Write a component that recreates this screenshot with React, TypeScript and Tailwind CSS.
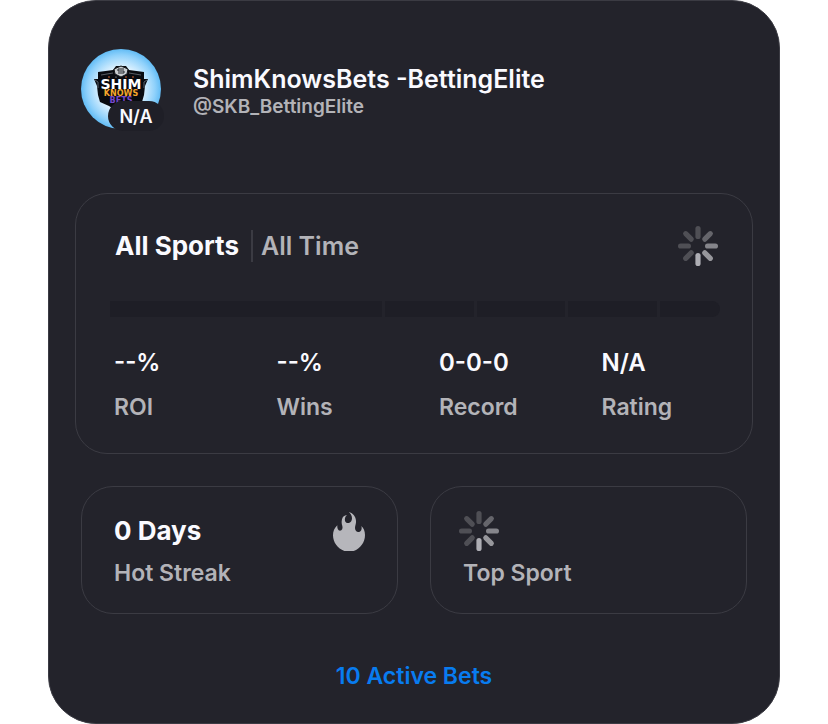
const stats = [
    { value: '--%', label: 'ROI' },
    { value: '--%', label: 'Wins' },
    { value: '0-0-0', label: 'Record' },
    { value: 'N/A', label: 'Rating' },
];

const spokes = [
    { angle: 0, color: '#4f4f55' },
    { angle: 45, color: '#65656b' },
    { angle: 90, color: '#85858b' },
    { angle: 135, color: '#97979c' },
    { angle: 180, color: '#aeaeb4' },
    { angle: 225, color: '#4f4f55' },
    { angle: 270, color: '#4f4f55' },
    { angle: 315, color: '#4f4f55' },
];

const Spinner = () => (
    <svg viewBox="0 0 40 40" className="h-10 w-10 shrink-0" role="img" aria-label="Loading">
        {spokes.map(({ angle, color }) => (
            <rect key={angle} x="17.4" y="0" width="5.2" height="13" rx="2.6" fill={color} transform={`rotate(${angle} 20 20)`} />
        ))}
    </svg>
);

const Flame = () => (
    <svg viewBox="0 0 96 117" className="h-[39px] w-8 shrink-0" fill="#b6b6bb" aria-hidden="true">
        <path d="M47 0C59 2 68 13 69 26C70 34 66 40 66 48C66 55 70 60 76 60C84 60 88 52 85 42C92 48 96 58 96 69C96 91 82 110 62 117H34C14 110 0 91 0 70C0 58 4 48 13 40C12 49 15 56 21 56C27 56 30 50 28 42C26 36 25 30 27 22C29 14 34 10 42 9C36 14 35 20 36 26C37 31 42 34 47 33C53 32 57 27 57 19C57 11 53 5 47 0Z" />
    </svg>
);

const Avatar = () => (
    <svg viewBox="0 0 80 80" className="h-20 w-20" role="img" aria-label="ShimKnowsBets logo">
        <defs>
            <radialGradient id="sky">
                <stop offset="0" stopColor="#ffffff" />
                <stop offset="0.5" stopColor="#e6f5ff" />
                <stop offset="0.85" stopColor="#8fd1fb" />
                <stop offset="1" stopColor="#62bcf5" />
            </radialGradient>
        </defs>
        <circle cx="40" cy="40" r="40" fill="url(#sky)" />
        <path d="M17 23L32 21L35 17H45L48 21L63 23V30H67L64 37L63 46L61 53L52 57L40 65L28 57L19 53L17 46L16 37L13 30H17Z" fill="#090b10" />
        <path d="M14 31L17 33V39M66 31L63 33V39" stroke="#59616a" strokeWidth="1" fill="none" />
        <path d="M33 20L40 17L47 20L46 25L40 28L34 25Z" fill="#c9cdd0" stroke="#15181c" strokeWidth="1" />
        <path d="M37 24H43V22H37V20H43" stroke="#22272c" strokeWidth="1" fill="none" />
        <path d="M20 26L32 24M48 24L60 26" stroke="#6d737a" strokeWidth="0.8" />
        <circle cx="28" cy="28" r="0.8" fill="#e96d35" />
        <circle cx="35" cy="28" r="0.6" fill="#c9cdd0" />
        <circle cx="45" cy="28" r="0.8" fill="#e96d35" />
        <circle cx="52" cy="28" r="0.8" fill="#e96d35" />
        <g textAnchor="middle" fontFamily="'DejaVu Sans', sans-serif" fontWeight="700">
            <text x="40" y="40" fontSize="14" fill="#ffffff">SHIM</text>
            <text x="40" y="47" fontSize="8" fill="#f5a52b">KNOWS</text>
            <text x="40" y="54" fontSize="8" fill="#7647c9">BETS</text>
        </g>
    </svg>
);

const App = () => {
    return (
        <div className="bg-white px-12 font-['Inter',sans-serif] font-semibold text-[#b3b3b8]">
            <main className="rounded-[48px] border border-[#3b3b43] bg-[#23232b] px-[26px] pt-12 pb-[31px]">
                <header className="flex items-start gap-8 px-1.5">
                    <div className="relative shrink-0">
                        <Avatar />
                        <span className="absolute top-[52px] left-[27px] w-14 rounded-full bg-[#1f1f27] pt-0.5 text-center text-lg leading-7 text-[#fafaff]">N/A</span>
                    </div>
                    <div className="min-w-0 pt-3.5">
                        <h1 className="text-[25px] leading-8 text-[#fafaff]">ShimKnowsBets -BettingElite</h1>
                        <p className="text-[19px] leading-6">@SKB_BettingElite</p>
                    </div>
                </header>

                <section className="mt-16 rounded-[32px] border border-[#3b3b43] pt-8 pr-8 pb-[30px] pl-[34px]">
                    <div className="flex items-center justify-between pr-0.5 pl-[5px]">
                        <div className="flex items-center leading-8">
                            <h2 className="text-[26px] font-bold text-[#fafaff]">All Sports</h2>
                            <span className="ml-3 h-8 border-l-2 border-[#3b3b43] pl-2 text-[25px]">All Time</span>
                        </div>
                        <Spinner />
                    </div>

                    <div className="mt-[35px] grid h-4 grid-cols-[273fr_89fr_89fr_89fr_60fr] gap-[3px] overflow-hidden rounded-l-md rounded-r-full">
                        <div className="bg-[#1e1e26]" />
                        <div className="bg-[#1e1e26]" />
                        <div className="bg-[#1e1e26]" />
                        <div className="bg-[#1e1e26]" />
                        <div className="bg-[#1e1e26]" />
                    </div>

                    <dl className="mt-[30px] grid grid-cols-4 gap-11 pl-1">
                        {stats.map(({ value, label }) => (
                            <div key={label} className="flex flex-col-reverse gap-3">
                                <dt className="text-[23px] leading-8">{label}</dt>
                                <dd className="text-2xl leading-8 text-[#fafaff]">{value}</dd>
                            </div>
                        ))}
                    </dl>
                </section>

                <div className="mt-8 grid grid-cols-2 gap-8 px-1.5">
                    <section className="rounded-[32px] border border-[#3b3b43] px-8 pt-6 pb-[26px]">
                        <div className="flex h-10 items-center justify-between">
                            <h2 className="text-[26px] leading-8 font-bold text-[#fafaff]">0 Days</h2>
                            <Flame />
                        </div>
                        <p className="mt-2 text-[23px] leading-7">Hot Streak</p>
                    </section>
                    <section className="rounded-[32px] border border-[#3b3b43] px-7 pt-6 pb-[26px]">
                        <Spinner />
                        <p className="mt-2 pl-1 text-[23px] leading-7">Top Sport</p>
                    </section>
                </div>

                <div className="mt-[46px] text-center">
                    <a href="#active-bets" className="inline-block align-top text-[23px] leading-8 text-[#087cf0]">10 Active Bets</a>
                </div>
            </main>
        </div>
    );
};

export default App;
